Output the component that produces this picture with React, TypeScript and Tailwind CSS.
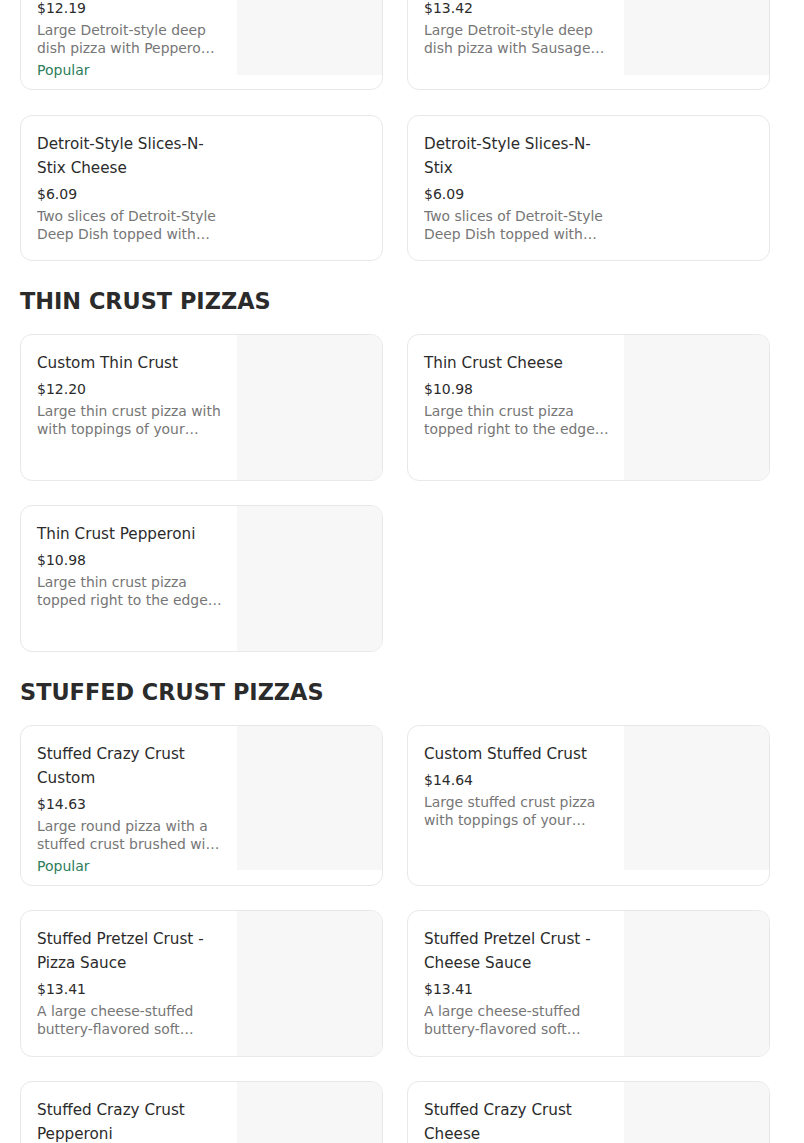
import React from "react";

interface Item {
  title: string;
  price: string;
  description: string;
  popular?: boolean;
  hasImage?: boolean;
}

interface Section {
  heading?: string;
  items: Item[];
}

const sections: Section[] = [
  {
    items: [
      {
        title: "Detroit-Style Deep Dish Pepperoni",
        price: "$12.19",
        description: "Large Detroit-style deep dish pizza with Pepperoni, Wisconsin cheese and our signature sauce.",
        popular: true,
        hasImage: true,
      },
      {
        title: "Detroit-Style Deep Dish Sausage",
        price: "$13.42",
        description: "Large Detroit-style deep dish pizza with Sausage and Wisconsin cheese and our signature sauce.",
        hasImage: true,
      },
      {
        title: "Detroit-Style Slices-N-Stix Cheese",
        price: "$6.09",
        description: "Two slices of Detroit-Style Deep Dish topped with cheese and served with Crazy Bread.",
      },
      {
        title: "Detroit-Style Slices-N-Stix",
        price: "$6.09",
        description: "Two slices of Detroit-Style Deep Dish topped with pepperoni and served with Crazy Bread.",
      },
    ],
  },
  {
    heading: "THIN CRUST PIZZAS",
    items: [
      {
        title: "Custom Thin Crust",
        price: "$12.20",
        description: "Large thin crust pizza with with toppings of your choice, baked to a golden crisp.",
        hasImage: true,
      },
      {
        title: "Thin Crust Cheese",
        price: "$10.98",
        description: "Large thin crust pizza topped right to the edge with cheese and sauce.",
        hasImage: true,
      },
      {
        title: "Thin Crust Pepperoni",
        price: "$10.98",
        description: "Large thin crust pizza topped right to the edge with pepperoni.",
        hasImage: true,
      },
    ],
  },
  {
    heading: "STUFFED CRUST PIZZAS",
    items: [
      {
        title: "Stuffed Crazy Crust Custom",
        price: "$14.63",
        description: "Large round pizza with a stuffed crust brushed with garlic butter and topped with Parmesan.",
        popular: true,
        hasImage: true,
      },
      {
        title: "Custom Stuffed Crust",
        price: "$14.64",
        description: "Large stuffed crust pizza with toppings of your choice.",
        hasImage: true,
      },
      {
        title: "Stuffed Pretzel Crust - Pizza Sauce",
        price: "$13.41",
        description: "A large cheese-stuffed buttery-flavored soft pretzel crust with pizza sauce.",
        hasImage: true,
      },
      {
        title: "Stuffed Pretzel Crust - Cheese Sauce",
        price: "$13.41",
        description: "A large cheese-stuffed buttery-flavored soft pretzel crust with cheese sauce.",
        hasImage: true,
      },
      {
        title: "Stuffed Crazy Crust Pepperoni",
        price: "$14.63",
        description: "Large round pizza with a stuffed crust and pepperoni.",
        hasImage: true,
      },
      {
        title: "Stuffed Crazy Crust Cheese",
        price: "$13.41",
        description: "Large round pizza with a stuffed crust and cheese.",
        hasImage: true,
      },
    ],
  },
];

const MenuCard: React.FC<{ item: Item }> = ({ item }) => (
  <div className="flex overflow-hidden rounded-xl border border-[#e8e8e8] bg-white">
    <div className="min-w-0 flex-1 pl-4 pr-[15px] pt-4 pb-[9px]">
      <h3 className="text-[15.2px] leading-6 text-[#2b2b2b]">{item.title}</h3>
      <p className="mt-1 text-sm leading-5 text-[#2b2b2b]">{item.price}</p>
      <p className="mt-[3px] line-clamp-2 text-[13.9px] leading-[18px] text-[#767676]">{item.description}</p>
      {item.popular && <p className="mt-[3px] text-sm leading-5 text-[#2e7d5b]">Popular</p>}
    </div>
    <div className={item.hasImage ? "h-[144.5px] w-[145px] shrink-0 bg-[#f7f7f7]" : "h-[144.5px] w-[145px] shrink-0"} />
  </div>
);

export default function App() {
  return (
    <div className="min-h-screen bg-white font-['DejaVu_Sans',sans-serif]">
      <div className="-mt-[71px] ml-5 w-[750px]">
        {sections.map((section, i) => (
          <section key={i}>
            {section.heading && (
              <h2 className="mb-[17px] mt-6 text-[22.4px] font-bold leading-8 text-[#2b2b2b]">{section.heading}</h2>
            )}
            <div className="grid grid-cols-2 gap-x-6 gap-y-[24.5px]">
              {section.items.map((item) => (
                <MenuCard key={item.title} item={item} />
              ))}
            </div>
          </section>
        ))}
      </div>
    </div>
  );
}
